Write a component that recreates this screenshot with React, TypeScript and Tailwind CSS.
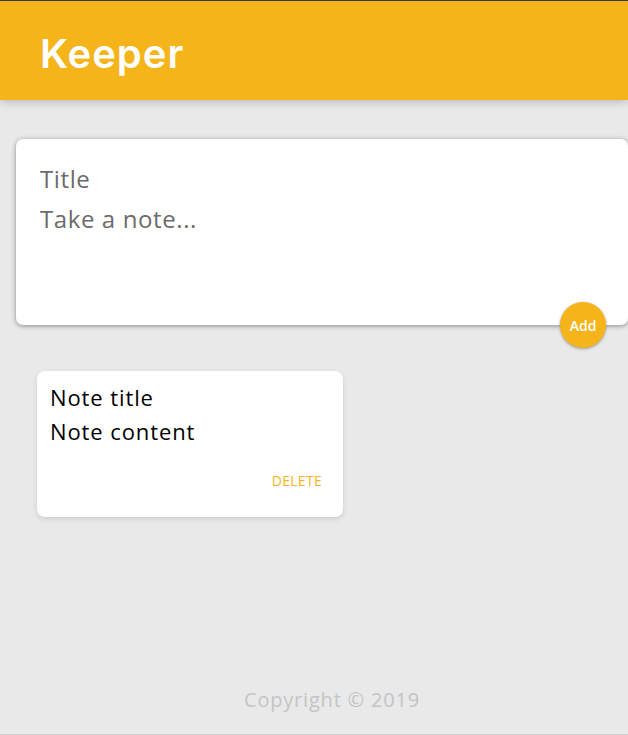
export default function App() {
  return (
    <div
      className="flex h-[735px] flex-col overflow-hidden border-t border-b border-t-[#3a3a3a] border-b-[#cfcfcf] bg-[#e9e9e9]"
      style={{ fontFamily: '"Open Sans", "Liberation Sans", sans-serif' }}
    >
      <header className="relative z-10 flex h-[99px] shrink-0 items-center bg-[#f5b41a] px-10 shadow-[0_0_10px_0_rgba(0,0,0,0.3)]">
        <h1
          className="pt-[6px] text-[40px] font-semibold leading-none tracking-[1px] text-white"
          style={{ fontFamily: 'Inter, "DejaVu Sans", sans-serif' }}
        >
          Keeper
        </h1>
      </header>

      <form className="relative ml-4 mt-[39px] flex h-[186px] flex-col rounded-[7px] bg-white px-6 pt-[19px] shadow-[0_1px_5px_rgb(138,137,137)]">
        <input
          name="title"
          placeholder="Title"
          className="h-[40px] w-full text-[24px] tracking-[0.6px] text-[#555] outline-none placeholder:text-[#6b6b6b]"
        />
        <textarea
          name="content"
          placeholder="Take a note..."
          rows={3}
          className="mt-[3px] w-full resize-none text-[24px] leading-[36px] tracking-[0.6px] text-[#555] outline-none placeholder:text-[#6b6b6b]"
        />
        <button
          type="button"
          className="absolute right-[22px] bottom-[-23px] flex h-[46px] w-[46px] items-center justify-center rounded-full bg-[#f5b41a] text-[14px] font-semibold text-white shadow-[0_1px_3px_#999]"
        >
          Add
        </button>
      </form>

      <div className="flex flex-wrap px-[37px] pt-[46px]">
        <div className="flex h-[146px] w-[306px] flex-col rounded-[8px] bg-white px-[13px] pt-[12px] shadow-[0_2px_5px_#ccc]">
          <h2 className="text-[22px] leading-[28px] tracking-[0.9px] text-black">Note title</h2>
          <p className="mt-[6px] text-[22px] leading-[28px] tracking-[0.9px] text-black">Note content</p>
          <button
            type="button"
            className="ml-auto mt-[25px] mr-[8px] text-[14px] font-medium uppercase tracking-[0.3px] text-[#f5b41a]"
          >
            Delete
          </button>
        </div>
      </div>

      <footer className="mt-auto flex justify-center pb-[19px] pl-[36px]">
        <p className="text-[20px] tracking-[0.8px] text-[#c4c4c4]">Copyright © 2019</p>
      </footer>
    </div>
  );
}
